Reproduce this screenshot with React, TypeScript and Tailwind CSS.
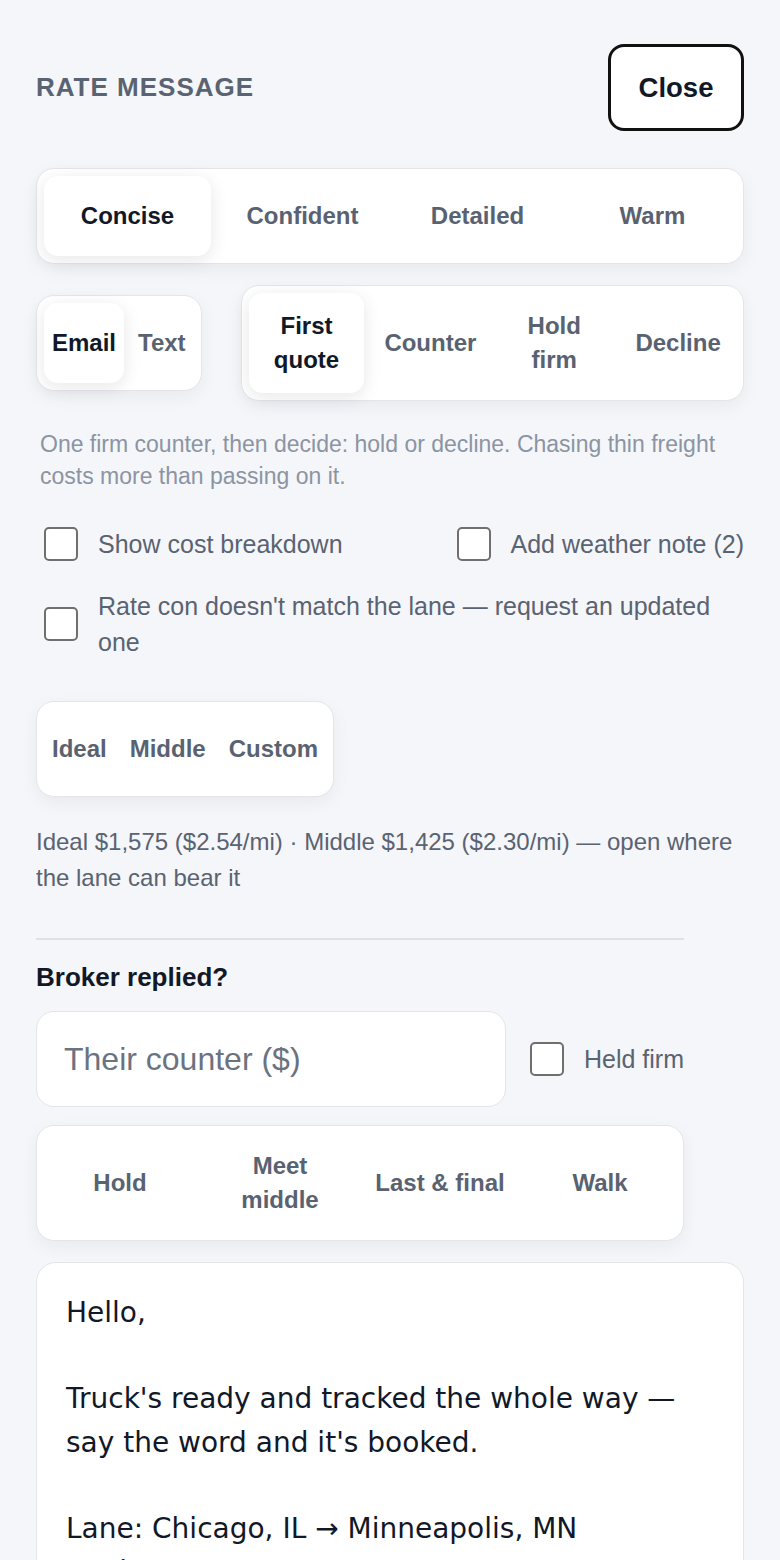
import React from "react";

const seg =
  "rounded-[18px] border border-[#e3e5e9] bg-white p-[7px] shadow-[0_6px_18px_rgba(17,24,39,0.05)]";
const itemBase =
  "flex min-h-[80px] items-center justify-center rounded-[14px] text-center text-[24px] font-bold leading-[34px]";
const sel = "bg-white text-[#111827] shadow-[0_4px_18px_rgba(17,24,39,0.10)]";
const unsel = "text-[#596271]";

function Box() {
  return (
    <span className="block h-[34px] w-[34px] shrink-0 rounded-[5px] border-2 border-[#6f6f6f] bg-white" />
  );
}

export default function App() {
  const tones = ["Concise", "Confident", "Detailed", "Warm"];
  const stages = ["First quote", "Counter", "Hold firm", "Decline"];
  const counters = ["Hold", "Meet middle", "Last & final", "Walk"];
  const message =
    "Hello,\n\nTruck's ready and tracked the whole way — say the word and it's booked.\n\nLane: Chicago, IL → Minneapolis, MN\nEquipment: Dry Van\nRate: $1,575 all-in\n\nThanks,";
  return (
    <div className="min-h-screen bg-[#f5f6f9] px-9 pt-[44px] font-['Liberation_Sans',Arial,sans-serif]">
      <div className="flex items-center justify-between">
        <h1 className="text-[26px] font-bold tracking-[1px] text-[#5a6372]">RATE MESSAGE</h1>
        <button className="h-[87px] w-[136px] rounded-[16px] border-[3px] border-[#111111] bg-white text-[27.5px] font-bold text-[#111827]">
          Close
        </button>
      </div>

      <div className={`mt-[37px] grid grid-cols-4 gap-2 ${seg}`}>
        {tones.map((t, i) => (
          <div key={t} className={`${itemBase} px-[9px] ${i === 0 ? sel : unsel}`}>
            {t}
          </div>
        ))}
      </div>

      <div className="mt-[21px] flex items-center gap-[39px]">
        <div className={`flex gap-[6px] ${seg}`}>
          <div className={`${itemBase} px-2 ${sel}`}>Email</div>
          <div className={`${itemBase} px-2 ${unsel}`}>Text</div>
        </div>
        <div className={`grid flex-1 grid-cols-4 gap-2 ${seg}`}>
          {stages.map((t, i) => (
            <div key={t} className={`${itemBase} px-[9px] py-4 ${i === 0 ? sel : unsel}`}>
              {t}
            </div>
          ))}
        </div>
      </div>

      <p className="mt-[27px] px-1 text-[23px] leading-8 text-[#8b94a3]">
        One firm counter, then decide: hold or decline. Chasing thin freight costs more than passing on it.
      </p>

      <div className="mt-[34px] flex flex-wrap justify-between gap-y-[26px] pl-2">
        <label className="flex items-center gap-5">
          <Box />
          <span className="text-[25px] leading-9 text-[#5a6372]">Show cost breakdown</span>
        </label>
        <label className="flex items-center gap-5">
          <Box />
          <span className="text-[25px] leading-9 text-[#5a6372]">Add weather note (2)</span>
        </label>
        <label className="flex items-center gap-5 pr-6">
          <Box />
          <span className="text-[25px] leading-9 text-[#5a6372]">
            Rate con doesn't match the lane — request an updated one
          </span>
        </label>
      </div>

      <div className={`mt-[41px] inline-flex gap-[7px] ${seg}`}>
        {["Ideal", "Middle", "Custom"].map((t) => (
          <div key={t} className={`${itemBase} px-2 ${unsel}`}>
            {t}
          </div>
        ))}
      </div>

      <p className="mt-[27px] text-[24px] leading-9 text-[#5a6372]">
        Ideal $1,575 ($2.54/mi) · Middle $1,425 ($2.30/mi) — open where the lane can bear it
      </p>

      <div className="mt-[42px] h-[2px] w-[648px] bg-[#dfe1e6]" />

      <h2 className="mt-5 text-[26px] font-bold leading-[34px] text-[#111827]">Broker replied?</h2>

      <div className="mt-[17px] flex w-[648px] items-center">
        <input
          className="h-[96px] min-w-0 flex-1 rounded-[18px] border border-[#e3e5e9] bg-white px-[27px] text-[32px] text-[#111827] outline-none placeholder:text-[#6b7280]"
          placeholder="Their counter ($)"
        />
        <label className="ml-6 flex items-center gap-5">
          <Box />
          <span className="text-[25px] leading-9 text-[#5a6372]">Held firm</span>
        </label>
      </div>

      <div className={`mt-[18px] grid w-[648px] grid-cols-4 gap-2 ${seg}`}>
        {counters.map((t) => (
          <div key={t} className={`${itemBase} px-[10px] py-4 ${unsel}`}>
            {t}
          </div>
        ))}
      </div>

      <textarea
        readOnly
        className="mt-[21px] block h-[620px] w-full resize-none rounded-[20px] border border-[#e3e5e9] bg-white px-[29px] pt-[28px] font-['DejaVu_Sans',sans-serif] text-[28px] leading-[43.2px] text-[#111827] outline-none"
        defaultValue={message}
      />
    </div>
  );
}
